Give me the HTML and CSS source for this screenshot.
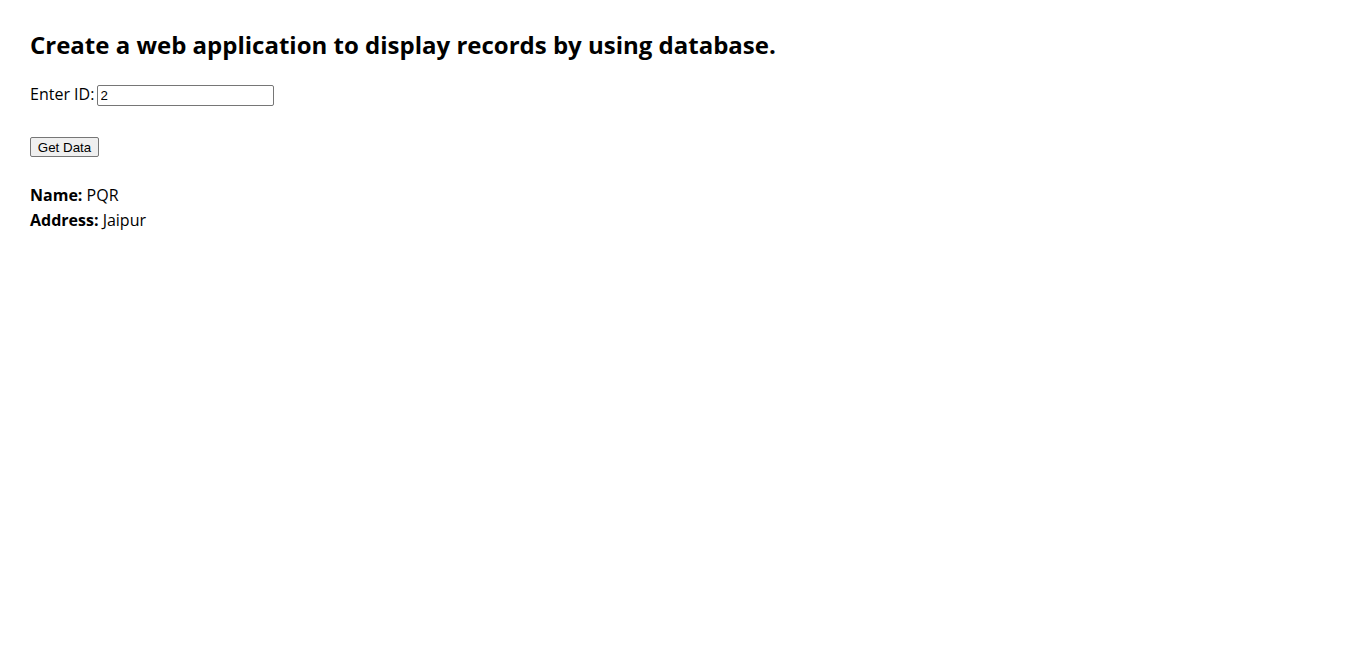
FILE: index.html
```html
<!DOCTYPE html>
<html>
<head>
<meta charset="utf-8">
<title>Display Records</title>
<link rel="stylesheet" href="styles.css">
</head>
<body>
<h1 class="title">Create a web application to display records by using database.</h1>
<form class="form">
  <div class="row"><label class="label" for="id">Enter ID:</label> <input class="input" id="id" type="text" value="2"></div>
  <div class="actions"><button class="btn" type="button">Get Data</button></div>
</form>
<div class="result">
  <div class="line"><b class="key">Name:</b> PQR</div>
  <div class="line"><b class="key">Address:</b> Jaipur</div>
</div>
</body>
</html>
```

FILE: styles.css
```css
html, body { background: #fff; }
body {
  margin: 0;
  padding: 27px 30px;
  font-family: "Open Sans", "DejaVu Sans", sans-serif;
  font-size: 16px;
  line-height: 25px;
  color: #000;
}
.title {
  font-size: 24px;
  line-height: 36px;
  font-weight: 700;
  margin: 0 0 19px;
}
.form { margin: 0; }
.row { height: 25px; }
.input {
  box-sizing: border-box;
  width: 177px;
  height: 21px;
  margin-left: -2px;
  border: 1px solid #767676;
  border-radius: 2px;
  padding: 1px 3px;
  font-family: "Liberation Sans", Arial, sans-serif;
  font-size: 13.33px;
  color: #000;
  vertical-align: 0;
}
.actions { margin-top: 30px; height: 20px; line-height: 20px; }
.btn {
  box-sizing: border-box;
  height: 20px;
  width: 69px;
  padding: 0 6px;
  border: 1px solid #767676;
  border-radius: 2px;
  background: #efefef;
  font-family: "Liberation Sans", Arial, sans-serif;
  font-size: 13.33px;
  color: #000;
  vertical-align: top;
}
.result { margin-top: 26px; }
.key { font-weight: 700; }
```
